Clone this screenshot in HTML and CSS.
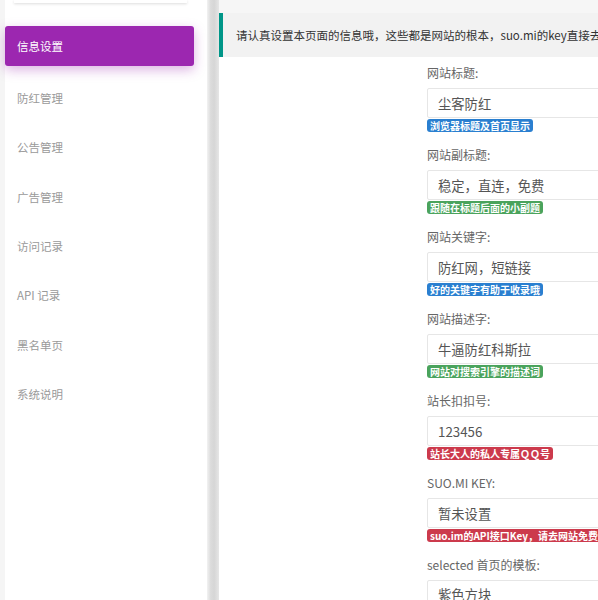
FILE: index.html
```html
<!DOCTYPE html>
<html lang="zh-CN">
<head>
<meta charset="utf-8">
<title>信息设置</title>
<link rel="stylesheet" href="styles.css">
</head>
<body>
<div class="app">
  <aside class="sidebar">
    <div class="logo-card"></div>
    <nav class="nav">
      <a class="nav-item active">信息设置</a>
      <a class="nav-item">防红管理</a>
      <a class="nav-item">公告管理</a>
      <a class="nav-item">广告管理</a>
      <a class="nav-item">访问记录</a>
      <a class="nav-item">API 记录</a>
      <a class="nav-item">黑名单页</a>
      <a class="nav-item">系统说明</a>
    </nav>
  </aside>
  <div class="gutter"></div>
  <main class="main">
    <div class="topbar"></div>
    <div class="notice">请认真设置本页面的信息哦，这些都是网站的根本，suo.mi的key直接去网站免费注册获取</div>
    <form class="form">
      <div class="field">
        <label class="label">网站标题:</label>
        <input class="input" value="尘客防红">
        <span class="tag tag-blue">浏览器标题及首页显示</span>
      </div>
      <div class="field">
        <label class="label">网站副标题:</label>
        <input class="input" value="稳定，直连，免费">
        <span class="tag tag-green">跟随在标题后面的小副题</span>
      </div>
      <div class="field">
        <label class="label">网站关键字:</label>
        <input class="input" value="防红网，短链接">
        <span class="tag tag-blue">好的关键字有助于收录哦</span>
      </div>
      <div class="field">
        <label class="label">网站描述字:</label>
        <input class="input" value="牛逼防红科斯拉">
        <span class="tag tag-green">网站对搜索引擎的描述词</span>
      </div>
      <div class="field">
        <label class="label">站长扣扣号:</label>
        <input class="input" value="123456">
        <span class="tag tag-red">站长大人的私人专属ＱＱ号</span>
      </div>
      <div class="field">
        <label class="label">SUO.MI KEY:</label>
        <input class="input" value="暂未设置">
        <span class="tag tag-red">suo.im的API接口Key，请去网站免费注册获取</span>
      </div>
      <div class="field">
        <label class="label">selected 首页的模板:</label>
        <div class="input select">紫色方块</div>
      </div>
    </form>
  </main>
</div>
</body>
</html>
```

FILE: styles.css
```css
html, body {
  margin: 0;
  padding: 0;
  overflow: hidden;
  background: #fff;
}

body {
  font-family: "Noto Sans CJK SC", "Noto Sans", "Liberation Sans", sans-serif;
}

.app {
  display: flex;
  height: 600px;
  width: 598px;
  overflow: hidden;
}

.sidebar {
  width: 202px;
  flex: none;
  border-left: 5px solid #f5f5f5;
  background: #fff;
}

.logo-card {
  height: 3px;
  margin: 0 20px 0 9px;
  background: #fff;
  box-shadow: 0 1px 3px rgba(0, 0, 0, 0.14);
}

.nav {
  display: flex;
  flex-direction: column;
  padding: 23px 13px 0 0;
}

.nav-item {
  display: block;
  height: 40px;
  line-height: 40px;
  margin-bottom: 9.33px;
  padding-left: 12px;
  font-size: 11.5px;
  color: #9a9a9a;
  border-radius: 3px;
}

.nav-item.active {
  margin-bottom: 12px;
  background: #9c27b0;
  color: #fff;
  box-shadow: 0 4px 12px rgba(156, 39, 176, 0.35);
}

.gutter {
  width: 12px;
  flex: none;
  background: linear-gradient(to right, #f2f2f2 0, #dcdcdc 30%, #d6d6d6 60%, #e6e6e6 100%);
}

.main {
  flex: 1;
  min-width: 0;
  overflow: hidden;
  background: #fff;
}

.topbar {
  height: 13px;
  background: #f6f6f6;
}

.notice {
  height: 44px;
  line-height: 44px;
  background: #f2f2f2;
  border-left: 4px solid #009688;
  padding-left: 13px;
  font-size: 11.5px;
  color: #333;
  white-space: nowrap;
}

.form {
  margin: 0 0 0 208px;
  padding-top: 6px;
}

.field {
  margin-bottom: 13px;
}

.label {
  display: block;
  height: 20px;
  line-height: 20px;
  margin-bottom: 5px;
  font-size: 12px;
  color: #666;
  white-space: nowrap;
}

.input {
  display: block;
  box-sizing: border-box;
  width: 380px;
  height: 30px;
  margin: 0;
  padding: 0 10px;
  border: 1px solid #e6e6e6;
  border-radius: 2px;
  background: #fff;
  font-family: inherit;
  font-size: 13.3px;
  line-height: 28px;
  color: #555;
  outline: none;
}

.tag {
  display: block;
  width: fit-content;
  margin-top: 1px;
  height: 13px;
  line-height: 13px;
  padding: 0 3px;
  border-radius: 3px;
  font-size: 10px;
  font-weight: bold;
  color: #fff;
  white-space: nowrap;
}

.tag-blue { background: #2a7fd0; }
.tag-green { background: #4aa35c; }
.tag-red { background: #cc3a4c; }
```
